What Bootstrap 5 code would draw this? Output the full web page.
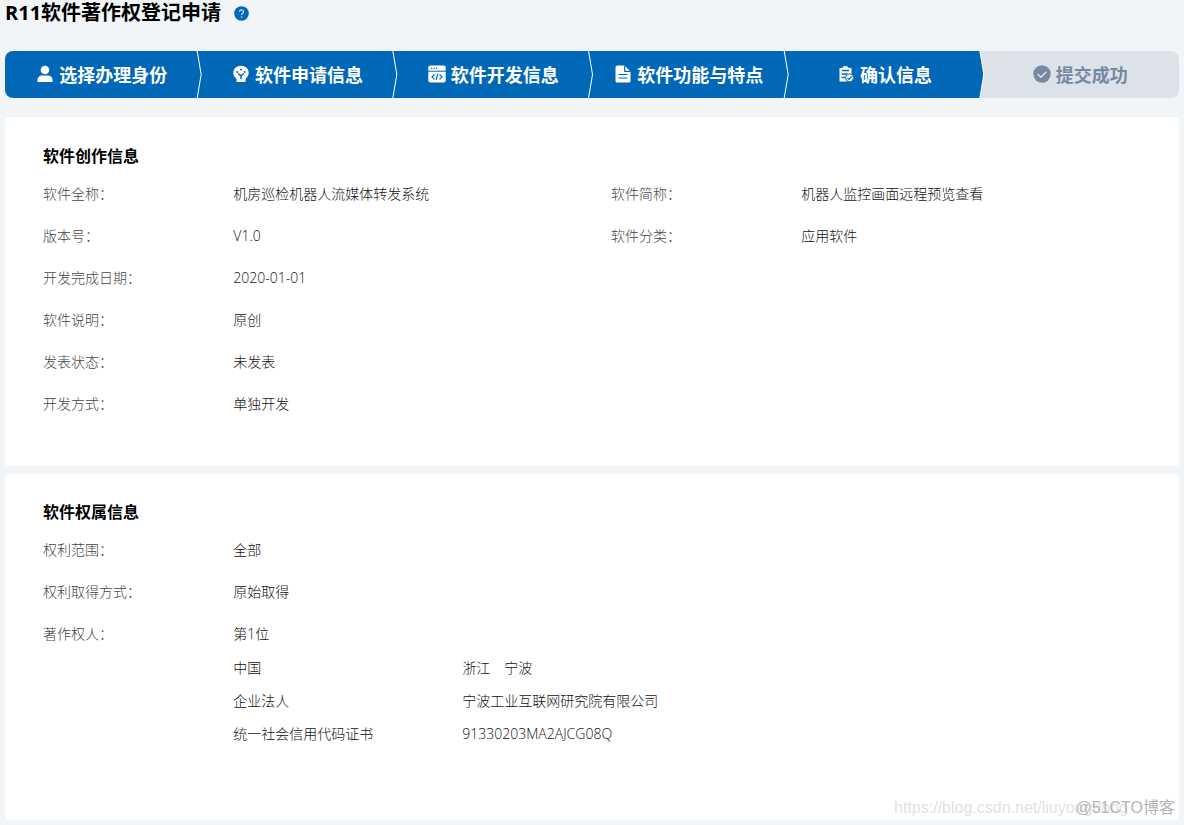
<!DOCTYPE html>
<html lang="zh-CN">
<head>
<meta charset="utf-8">
<meta name="viewport" content="width=device-width, initial-scale=1">
<title>R11软件著作权登记申请</title>
<link href="https://cdn.jsdelivr.net/npm/bootstrap@5.3.0/dist/css/bootstrap.min.css" rel="stylesheet">
<style>
  body { background: #f1f5f8; color: #111; font: 300 14px/20px "Open Sans", "Noto Sans CJK SC", sans-serif; }
  .page { padding: 0 5px 4px; }
  .page-head { gap: 13px; }
  .page-title { font-size: 20px; line-height: 26px; color: #000; }
  .help { width: 15px; height: 15px; }
  .steps { height: 47px; margin: 25px 0 19px; border-radius: 8px; background: #fff; font: bold 18px/24px "Noto Sans CJK SC", sans-serif; }
  .step { position: relative; z-index: 0; flex: 1 1 0; gap: 5px; padding: 0 2px 1px 0; color: #fff; }
  .step::before {
    content: ""; position: absolute; z-index: -1; inset: 0 0 0 -3px; background: #0068b7;
    clip-path: polygon(0 0, calc(100% - 4px) 0, 100% 50%, calc(100% - 4px) 100%, 0 100%, 4px 50%);
  }
  .step:first-child::before { left: -4px; }
  .step:last-child { color: #7589a3; }
  .step:last-child::before { right: -4px; background: #dce2e7; }
  .step svg { width: 18px; height: 18px; }
  .panel { background: #fff; border-radius: 4px; padding: 27px 0 41px 38px; }
  .panel-title { font-size: 16px; line-height: 24px; color: #000; margin-bottom: 5px; }
  .panel-last { padding: 26px 0 65px 38px; }
  .field { min-height: 42px; padding: 11px 0; }
  .field dt { font-weight: 300; color: #444; }
  .field dd { padding-left: 1px; }
  .owner { display: grid; grid-template-columns: 229px 1fr; row-gap: 13px; margin-top: 14px; }
  .stamp { position: absolute; right: 4px; bottom: 2px; font: 16px/20px "Liberation Sans", "Noto Sans CJK SC", sans-serif; color: #b4b4b4; }
  .stamp-link { position: absolute; right: 47px; bottom: 0; color: #e2e2e2; text-decoration: none; white-space: nowrap; }
</style>
</head>
<body>
<main class="page">
  <header class="page-head d-flex align-items-center">
    <h1 class="page-title fw-bold mb-0">R11软件著作权登记申请</h1>
    <svg class="help" viewBox="0 0 15 15" role="img" aria-label="帮助"><circle cx="7.500" cy="7.500" r="7.300" fill="#0068b7"/><path d="M5.500 5.800a2 1.900 0 1 1 3 1.600c-.7.400-1 .7-1 1.500" fill="none" stroke="#cfe2f2" stroke-width="1.200"/><circle cx="7.500" cy="11" r=".8" fill="#cfe2f2"/></svg>
  </header>

  <ol class="steps list-unstyled d-flex overflow-hidden">
    <li class="step d-flex align-items-center justify-content-center">
      <svg viewBox="0 0 18 18" fill="currentColor"><circle cx="9" cy="5" r="4.300"/><path d="M1.500 17v-2.200c0-2.400 2-4.300 4.500-4.300h6c2.500 0 4.500 1.900 4.500 4.300V17z"/></svg>
      选择办理身份</li>
    <li class="step d-flex align-items-center justify-content-center">
      <svg viewBox="0 0 18 18"><path d="M9 .8c4.500 0 7.700 3 7.700 7 0 2.600-1.200 4.600-3.200 5.900V17h-9v-3.300C2.500 12.400 1.300 10.400 1.300 7.800c0-4 3.200-7 7.700-7z" fill="currentColor"/><path d="M9 14V10.500M9 10.800L6 8.500M9 10.800L12 8.500" stroke="#0068b7" stroke-width="1.500" fill="none"/><g fill="#0068b7"><circle cx="5.300" cy="7" r="1"/><circle cx="12.700" cy="7" r="1"/><circle cx="9" cy="4.600" r="1"/></g></svg>
      软件申请信息</li>
    <li class="step d-flex align-items-center justify-content-center">
      <svg viewBox="0 0 18 18"><rect x=".3" y=".5" width="17.400" height="17" rx="2" fill="currentColor"/><path d="M0 6.200h18" stroke="#0068b7" stroke-width="1"/><path d="M3 3.400h1.300M5.500 3.400h1.300M8 3.400h1.300" stroke="#0068b7" stroke-width="1.300"/><path d="M6.500 9.300L4 11.800l2.500 2.500M11.500 9.300l2.500 2.500-2.500 2.500M9.800 8.800l-1.600 6" stroke="#0068b7" stroke-width="1.200" fill="none"/></svg>
      软件开发信息</li>
    <li class="step d-flex align-items-center justify-content-center">
      <svg viewBox="0 0 18 18"><path d="M3.500.5h7l6 6v9.500a1.500 1.500 0 0 1-1.500 1.500H3A1.500 1.500 0 0 1 1.500 16V2.500a2 2 0 0 1 2-2z" fill="currentColor"/><path d="M10.700.5v5.800h5.800M4.500 9.500h9M4.500 13h9" stroke="#0068b7" stroke-width="1.200" fill="none"/></svg>
      软件功能与特点</li>
    <li class="step d-flex align-items-center justify-content-center">
      <svg viewBox="0 0 18 18"><path d="M2.500 3h3c0-1.200 1.200-2 3-2s3 .8 3 2h3v13.500h-12z" fill="currentColor"/><path d="M5 5.500h7M4.500 9h6M4.500 12.500h3.500" stroke="#0068b7" stroke-width="1.300"/><circle cx="12.500" cy="12.800" r="4" fill="currentColor" stroke="#0068b7"/><path d="M10.500 12.800l1.500 1.500 2.700-3" stroke="#0068b7" stroke-width="1.200" fill="none"/></svg>
      确认信息</li>
    <li class="step d-flex align-items-center justify-content-center">
      <svg viewBox="0 0 18 18"><circle cx="9" cy="9" r="8.700" fill="currentColor"/><path d="M4.700 9l3.200 3.200 5.500-5.500" stroke="#dce2e7" stroke-width="1.500" fill="none"/></svg>
      提交成功</li>
  </ol>

  <section class="panel mb-2">
    <h2 class="panel-title fw-bold">软件创作信息</h2>
    <div class="row g-0">
      <dl class="col-6 mb-0">
        <div class="field row g-0"><dt class="col-4">软件全称：</dt><dd class="col-8 mb-0">机房巡检机器人流媒体转发系统</dd></div>
        <div class="field row g-0"><dt class="col-4">版本号：</dt><dd class="col-8 mb-0">V1.0</dd></div>
        <div class="field row g-0"><dt class="col-4">开发完成日期：</dt><dd class="col-8 mb-0">2020-01-01</dd></div>
        <div class="field row g-0"><dt class="col-4">软件说明：</dt><dd class="col-8 mb-0">原创</dd></div>
        <div class="field row g-0"><dt class="col-4">发表状态：</dt><dd class="col-8 mb-0">未发表</dd></div>
        <div class="field row g-0"><dt class="col-4">开发方式：</dt><dd class="col-8 mb-0">单独开发</dd></div>
      </dl>
      <dl class="col-6 mb-0">
        <div class="field row g-0"><dt class="col-4">软件简称：</dt><dd class="col-8 mb-0">机器人监控画面远程预览查看</dd></div>
        <div class="field row g-0"><dt class="col-4">软件分类：</dt><dd class="col-8 mb-0">应用软件</dd></div>
      </dl>
    </div>
  </section>

  <section class="panel panel-last position-relative">
    <h2 class="panel-title fw-bold">软件权属信息</h2>
    <dl class="mb-0">
      <div class="field row g-0"><dt class="col-2">权利范围：</dt><dd class="col-10 mb-0">全部</dd></div>
      <div class="field row g-0"><dt class="col-2">权利取得方式：</dt><dd class="col-10 mb-0">原始取得</dd></div>
      <div class="field row g-0"><dt class="col-2">著作权人：</dt>
        <dd class="col-10 mb-0">第1位
          <div class="owner">
            <span>中国</span><span>浙江　宁波</span>
            <span>企业法人</span><span>宁波工业互联网研究院有限公司</span>
            <span>统一社会信用代码证书</span><span>91330203MA2AJCG08Q</span>
          </div>
        </dd>
      </div>
    </dl>
    <div class="stamp"><a class="stamp-link" href="#">https://blog.csdn.net/liuyongdong</a><span class="position-relative">@51CTO博客</span></div>
  </section>
</main>
<script src="https://cdn.jsdelivr.net/npm/bootstrap@5.3.0/dist/js/bootstrap.bundle.min.js"></script>
</body>
</html>
